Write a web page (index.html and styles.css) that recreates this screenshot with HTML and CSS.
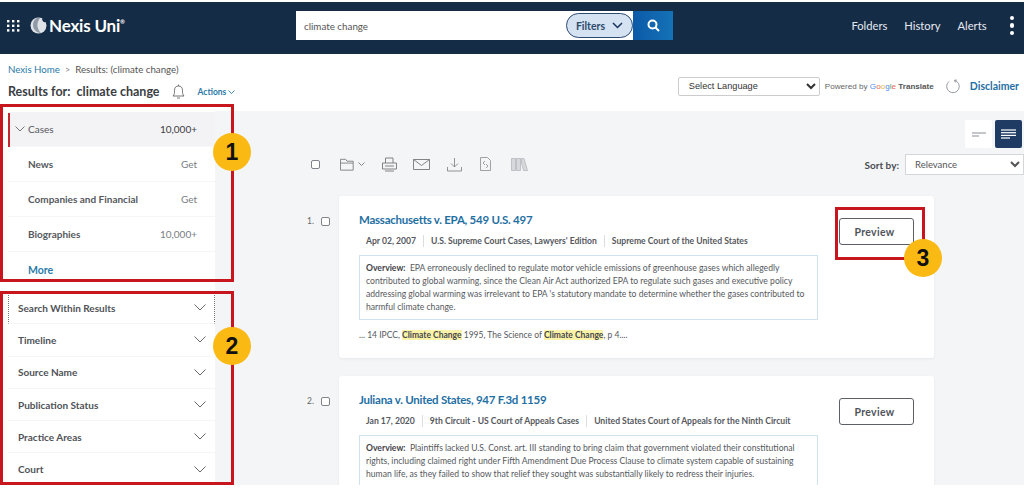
FILE: index.html
```html
<!DOCTYPE html>
<html lang="en">
<head>
    <meta charset="UTF-8">
    <title>Nexis Uni - Results</title>
    <link rel="stylesheet" href="styles.css">
</head>
<body>
    <div class="page">
        <header class="topbar">
            <div class="brand">
                <svg class="apps" width="13" height="12" viewBox="0 0 13 12" fill="#fff">
                    <rect x="0" y="0" width="2.4" height="2.4"/><rect x="5" y="0" width="2.4" height="2.4"/><rect x="10" y="0" width="2.4" height="2.4"/>
                    <rect x="0" y="4.6" width="2.4" height="2.4"/><rect x="5" y="4.6" width="2.4" height="2.4"/><rect x="10" y="4.6" width="2.4" height="2.4"/>
                    <rect x="0" y="9.2" width="2.4" height="2.4"/><rect x="5" y="9.2" width="2.4" height="2.4"/><rect x="10" y="9.2" width="2.4" height="2.4"/>
                </svg>
                <svg class="globe" width="17" height="17" viewBox="0 0 17 17">
                    <circle cx="8.5" cy="8.5" r="8" fill="#dfe3e8"/>
                    <path d="M7 1 C3 3 2 8 4 12 C6 15 9 16 11 16 C7 12 6 6 10 1 Z" fill="#8f9aa6"/>
                    <path d="M12 1.5 C15 1 16.5 3 16 5 C14 6 12 4 12 1.5 Z" fill="#152c47"/>
                </svg>
                <span class="brand-name">Nexis Uni<sup>®</sup></span>
            </div>
            <div class="search">
                <span class="search-text">climate change</span>
                <span class="filters">Filters
                    <svg width="11" height="7" viewBox="0 0 11 7" fill="none" stroke="#17345a" stroke-width="1.5"><path d="M1 1 L5.5 5.5 L10 1"/></svg>
                </span>
                <span class="search-btn">
                    <svg width="13" height="13" viewBox="0 0 13 13" fill="none" stroke="#fff" stroke-width="2"><circle cx="5.5" cy="5.5" r="4"/><path d="M8.5 8.5 L12 12"/></svg>
                </span>
            </div>
            <nav class="topnav">
                <a>Folders</a>
                <a>History</a>
                <a>Alerts</a>
                <span class="more-dots"><i></i><i></i><i></i></span>
            </nav>
        </header>

        <div class="subbar">
            <div>
                <div class="crumbs"><a>Nexis Home</a><span class="crumb-sep">&gt;</span>Results: (climate change)</div>
                <div class="results-for">
                    <h1>Results for:&nbsp; climate change</h1>
                    <svg width="13" height="15" viewBox="0 0 13 15" fill="none" stroke="#666" stroke-width="0.9"><path d="M1 12 C2.5 10.5 2.5 9 2.5 6.5 C2.5 3.5 4 2 6.5 2 C9 2 10.5 3.5 10.5 6.5 C10.5 9 10.5 10.5 12 12 Z"/><path d="M5 14 H8"/><path d="M6.5 0.5 V2"/></svg>
                    <a class="actions">Actions
                        <svg width="7" height="4" viewBox="0 0 7 4" fill="none" stroke="#1b6f9f" stroke-width="0.8"><path d="M0.5 0.5 L3.5 3.5 L6.5 0.5"/></svg>
                    </a>
                </div>
            </div>
            <div class="translate">
                <select class="lang-select"><option>Select Language</option></select>
                <span class="powered">Powered by <span class="google"><b class="g-blue">G</b><b class="g-red">o</b><b class="g-yellow">o</b><b class="g-blue">g</b><b class="g-green">l</b><b class="g-red">e</b></span> <strong>Translate</strong></span>
                <svg class="refresh" width="15" height="15" viewBox="0 0 15 15" fill="none" stroke="#8a8f96" stroke-width="0.9"><path d="M9.5 1.3 A6.3 6.3 0 1 1 4 2.5"/><path d="M9.5 1.3 L11.8 1 M9.5 1.3 L10.5 3.5"/></svg>
                <a class="disclaimer">Disclaimer</a>
            </div>
        </div>

        <div class="main">
            <aside class="sidebar">
                <ul class="sources">
                    <li class="source active">
                        <span class="source-name">
                            <svg width="10" height="6" viewBox="0 0 10 6" fill="none" stroke="#666" stroke-width="0.9"><path d="M0.5 0.5 L5 5 L9.5 0.5"/></svg>
                            Cases</span>
                        <span class="count">10,000+</span>
                    </li>
                    <li class="source"><span class="source-name">News</span><span class="get">Get</span></li>
                    <li class="source"><span class="source-name">Companies and Financial</span><span class="get">Get</span></li>
                    <li class="source"><span class="source-name">Biographies</span><span class="get">10,000+</span></li>
                    <li class="source source-more"><a>More</a></li>
                </ul>
                <ul class="facets">
                    <li class="facet first">Search Within Results<svg class="chev" width="12" height="7" viewBox="0 0 12 7"><path d="M0.5 0.5 L6 6 L11.5 0.5"/></svg></li>
                    <li class="facet">Timeline<svg class="chev" width="12" height="7" viewBox="0 0 12 7"><path d="M0.5 0.5 L6 6 L11.5 0.5"/></svg></li>
                    <li class="facet">Source Name<svg class="chev" width="12" height="7" viewBox="0 0 12 7"><path d="M0.5 0.5 L6 6 L11.5 0.5"/></svg></li>
                    <li class="facet">Publication Status<svg class="chev" width="12" height="7" viewBox="0 0 12 7"><path d="M0.5 0.5 L6 6 L11.5 0.5"/></svg></li>
                    <li class="facet">Practice Areas<svg class="chev" width="12" height="7" viewBox="0 0 12 7"><path d="M0.5 0.5 L6 6 L11.5 0.5"/></svg></li>
                    <li class="facet">Court<svg class="chev" width="12" height="7" viewBox="0 0 12 7"><path d="M0.5 0.5 L6 6 L11.5 0.5"/></svg></li>
                </ul>
            </aside>

            <section class="content">
                <div class="view-toggle">
                    <span class="view-btn">
                        <svg width="14" height="5" viewBox="0 0 14 5" fill="none" stroke="#8a8f96"><path d="M0 1 H14"/><path d="M0 4 H7"/></svg>
                    </span>
                    <span class="view-btn on">
                        <svg width="15" height="10" viewBox="0 0 15 10" fill="none" stroke="#fff" stroke-width="1.2"><path d="M0 1 H15"/><path d="M0 3.7 H15"/><path d="M0 6.4 H15"/><path d="M0 9 H9"/></svg>
                    </span>
                </div>
                <div class="toolbar">
                    <div class="tools">
                        <span class="box"></span>
                        <svg class="tool-folder" width="16" height="13" viewBox="0 0 17 13" fill="none" stroke="#777" stroke-width="0.9"><path d="M0.5 12.5 V1 H6 L7.5 3 H14 V5"/><path d="M0.5 12.5 H14 V5 H0.5"/></svg>
                        <svg class="tool-caret" width="7" height="4" viewBox="0 0 7 4" fill="none" stroke="#777" stroke-width="0.9"><path d="M0.5 0.5 L3.5 3.5 L6.5 0.5"/></svg>
                        <svg class="tool-print" width="15" height="15" viewBox="0 0 15 15" fill="none" stroke="#777" stroke-width="0.9"><path d="M3.5 6 V1 H11 V6"/><path d="M0.5 6 H14.5 V12 H0.5 Z"/><path d="M3 9 H12"/><path d="M3 14 H12"/></svg>
                        <svg width="17" height="11" viewBox="0 0 17 11" fill="none" stroke="#777" stroke-width="0.9"><path d="M0.5 0.5 H16.5 V10.5 H0.5 Z"/><path d="M0.5 0.5 L8.5 6.5 L16.5 0.5"/></svg>
                        <svg class="tool-save" width="15" height="15" viewBox="0 0 15 15" fill="none" stroke="#888" stroke-width="0.9"><path d="M7.5 1 V10"/><path d="M4 6.5 L7.5 10 L11 6.5"/><path d="M0.5 10 V14 H14.5 V10"/></svg>
                        <svg class="tool-doc" width="11" height="14" viewBox="0 0 11 14" fill="none" stroke="#999" stroke-width="0.9"><path d="M0.5 0.5 H7.5 L10.5 3.5 V13.5 H0.5 Z"/><path d="M3 6 L5 4 M3 6 L5 8"/><path d="M8 9 L6 7 M8 9 L6 11"/></svg>
                        <svg class="tool-books" width="17" height="13" viewBox="0 0 17 13" fill="#d6d8db" stroke="#aeb2b7" stroke-width="0.7"><path d="M0.5 0.5 H4.5 V12.5 H0.5 Z"/><path d="M5.5 0.5 H9.5 V12.5 H5.5 Z"/><path d="M10.5 0.5 H13 L16.5 12.5 H12.5 L10.5 5 Z"/></svg>
                    </div>
                    <label class="sort">Sort by:
                        <select class="sort-select"><option>Relevance</option></select>
                    </label>
                </div>

                <ol class="results">
                    <li class="result">
                        <div class="result-mark"><span class="num">1.</span><span class="box"></span></div>
                        <article class="card">
                            <div class="card-head">
                                <div>
                                    <h2 class="title">Massachusetts v. EPA, 549 U.S. 497</h2>
                                    <div class="meta"><span>Apr 02, 2007</span><span>U.S. Supreme Court Cases, Lawyers' Edition</span><span>Supreme Court of the United States</span></div>
                                </div>
                                <button class="preview">Preview</button>
                            </div>
                            <div class="overview"><b>Overview:</b>&nbsp; EPA erroneously declined to regulate motor vehicle emissions of greenhouse gases which allegedly<br>contributed to global warming, since the Clean Air Act authorized EPA to regulate such gases and executive policy<br>addressing global warming was irrelevant to EPA 's statutory mandate to determine whether the gases contributed to<br>harmful climate change.</div>
                            <p class="snippet">... 14 IPCC, <mark>Climate Change</mark> 1995, The Science of <mark>Climate Change</mark>, p 4....</p>
                        </article>
                    </li>
                    <li class="result">
                        <div class="result-mark"><span class="num">2.</span><span class="box"></span></div>
                        <article class="card">
                            <div class="card-head">
                                <div>
                                    <h2 class="title">Juliana v. United States, 947 F.3d 1159</h2>
                                    <div class="meta"><span>Jan 17, 2020</span><span>9th Circuit - US Court of Appeals Cases</span><span>United States Court of Appeals for the Ninth Circuit</span></div>
                                </div>
                                <button class="preview">Preview</button>
                            </div>
                            <div class="overview"><b>Overview:</b>&nbsp; Plaintiffs lacked U.S. Const. art. III standing to bring claim that government violated their constitutional<br>rights, including claimed right under Fifth Amendment Due Process Clause to climate system capable of sustaining<br>human life, as they failed to show that relief they sought was substantially likely to redress their injuries.</div>
                        </article>
                    </li>
                </ol>
            </section>
        </div>

        <div class="callout callout-1"></div>
        <div class="callout callout-2"></div>
        <div class="callout callout-3"></div>
        <span class="badge badge-1">1</span>
        <span class="badge badge-2">2</span>
        <span class="badge badge-3">3</span>
    </div>
</body>
</html>
```

FILE: styles.css
```css
* {
    box-sizing: border-box;
    margin: 0;
    padding: 0;
}
html, body {
    height: 496px;
    overflow: hidden;
    background: #fff;
}
body {
    font-family: Lato, "Open Sans", sans-serif;
    color: #4a4d52;
}
ul, ol {
    list-style: none;
}
.page {
    position: relative;
    height: 485px;
    overflow: hidden;
    padding-top: 2px;
}

/* top bar */
.topbar {
    height: 52px;
    padding-bottom: 5px;
    background: #152c47;
    display: flex;
    align-items: center;
    color: #fff;
}
.brand {
    width: 296px;
    padding-left: 7px;
    display: flex;
    align-items: center;
}
.globe {
    margin-left: 10px;
}
.brand-name {
    margin-left: 2px;
    font-size: 17px;
    font-weight: 700;
    letter-spacing: -0.2px;
}
.brand-name sup {
    font-size: 6px;
    vertical-align: 8px;
    line-height: 0;
}
.search {
    width: 377px;
    height: 29px;
    background: #fff;
    display: flex;
    align-items: center;
}
.search-text {
    flex: 1;
    padding-left: 8px;
    font-size: 9.8px;
    color: #555;
}
.filters {
    width: 67px;
    height: 25px;
    border: 1px solid #2c4a70;
    border-radius: 13px;
    background: #d4e2f2;
    color: #2d4a6b;
    font-size: 10.5px;
    font-weight: 700;
    display: flex;
    align-items: center;
    justify-content: center;
    gap: 7px;
}
.search-btn {
    width: 40px;
    height: 29px;
    background: linear-gradient(90deg, #0c5aa8, #1572b6);
    display: flex;
    align-items: center;
    justify-content: center;
}
.topnav {
    flex: 1;
    display: flex;
    align-items: center;
    justify-content: flex-end;
    padding-right: 10px;
    font-size: 11.2px;
    color: #e6eaef;
}
.topnav a {
    margin-right: 17px;
}
.more-dots {
    margin-left: 6px;
    display: flex;
    flex-direction: column;
    gap: 3px;
}
.more-dots i {
    width: 4.5px;
    height: 4.5px;
    background: #fff;
    border-radius: 50%;
}

/* breadcrumb row */
.subbar {
    height: 57px;
    padding: 9px 5px 0 8px;
    background: #fff;
    display: flex;
    justify-content: space-between;
}
.crumbs {
    font-size: 9.7px;
    line-height: 13px;
    color: #555;
}
.crumbs a {
    color: #2a78a8;
}
.crumb-sep {
    margin: 0 5px;
    font-size: 9px;
    color: #888;
}
.results-for {
    margin-top: 8px;
    display: flex;
    align-items: center;
}
.results-for h1 {
    font-size: 12.5px;
    font-weight: 700;
    color: #3a3d42;
    margin-right: 12px;
}
.actions {
    margin-left: 13px;
    font-size: 8.5px;
    font-weight: 700;
    color: #2a78a8;
}
.actions svg {
    vertical-align: 1px;
}
.translate {
    display: flex;
    align-items: center;
    height: 20px;
    margin-top: 13px;
}
.lang-select {
    width: 142px;
    height: 19px;
    padding-left: 6px;
    border: 1px solid #ccc;
    border-radius: 2px;
    background: #fff;
    font-family: "Liberation Sans", Arial, sans-serif;
    font-size: 9.2px;
    color: #333;
}
.powered {
    margin-left: 5px;
    font-family: "Liberation Sans", Arial, sans-serif;
    font-size: 8.1px;
    color: #666;
}
.powered strong {
    color: #555;
}
.google b {
    font-weight: 400;
}
.g-blue { color: #4d8df0; }
.g-red { color: #e5675c; }
.g-yellow { color: #e6bb3c; }
.g-green { color: #55ad6b; }
.refresh {
    margin-left: 11px;
}
.disclaimer {
    margin-left: 10px;
    font-size: 10.5px;
    font-weight: 700;
    color: #1f6fa3;
}

/* body */
.main {
    display: flex;
    height: 374px;
    background: #f4f5f7;
}
.sidebar {
    width: 215px;
    padding: 1px 0 0 8px;
    background: #fff;
    flex: none;
}
.sources {
    height: 180px;
}
.source {
    height: 35px;
    padding: 0 18px 0 20px;
    display: flex;
    align-items: center;
    justify-content: space-between;
    border-bottom: 1px solid #f6f6f7;
    font-size: 10px;
    font-weight: 700;
    color: #55585d;
}
.source.active {
    position: relative;
    background: #f3f3f5;
    font-weight: 400;
}
.source.active::before {
    content: "";
    position: absolute;
    left: 0;
    top: 1px;
    width: 2px;
    height: 34px;
    background: #c4262e;
}
.source.active .source-name svg {
    position: absolute;
    left: 7px;
    top: 14px;
}
.source.active .count {
    color: #3d4045;
}
.get {
    font-weight: 400;
    color: #7a7d82;
}
.source-more {
    border-bottom: 0;
    height: 36px;
}
.source-more a {
    color: #2a7cab;
    font-size: 10.5px;
}
.facet {
    height: 32.3px;
    padding: 0 9px 0 10px;
    display: flex;
    align-items: center;
    justify-content: space-between;
    border-bottom: 1px solid #f6f6f7;
    font-size: 10px;
    font-weight: 700;
    color: #4f5257;
}
.facet.first {
    border-left: 1px dotted #777;
    border-right: 1px dotted #777;
    padding-left: 9px;
    padding-right: 8px;
}
.chev {
    fill: none;
    stroke: #666;
    stroke-width: 1;
}
.content {
    flex: 1;
    padding-top: 9px;
    min-width: 0;
}
.view-toggle {
    display: flex;
    justify-content: flex-end;
    gap: 3px;
    padding-right: 2px;
}
.view-btn {
    width: 27px;
    height: 28px;
    border-radius: 2px;
    background: #fff;
    display: flex;
    align-items: center;
    justify-content: center;
}
.view-btn.on {
    background: #1f3a63;
}
.toolbar {
    height: 21px;
    margin-top: 6px;
    padding-left: 96px;
    display: flex;
    align-items: center;
    justify-content: space-between;
}
.tools {
    display: flex;
    align-items: center;
    gap: 16px;
    margin-top: -1px;
}
.tool-folder {
    margin-left: 4px;
}
.tool-caret {
    margin-left: -14px;
}
.tool-print {
    margin-left: 1px;
}
.tool-save {
    margin-left: 1px;
}
.tool-doc {
    margin-left: 2px;
}
.tool-books {
    margin-left: 4px;
}
.box {
    display: block;
    width: 9px;
    height: 9px;
    border: 1px solid #808388;
    border-radius: 2px;
    background: #fff;
}
.sort {
    display: flex;
    align-items: center;
    gap: 6px;
    font-size: 10px;
    font-weight: 700;
    color: #4a4d52;
}
.sort-select {
    width: 119px;
    height: 21px;
    padding-left: 5px;
    border: 1px solid #d5d6d8;
    background: #fff;
    font-family: Lato, sans-serif;
    font-size: 9.5px;
    color: #555;
}
.results {
    margin-top: 21px;
    padding-left: 92px;
}
.result {
    display: flex;
    margin-bottom: 18px;
}
.result-mark {
    width: 32px;
    padding-top: 20px;
    display: flex;
    align-items: center;
    align-self: flex-start;
    font-size: 8.5px;
    color: #666;
}
.num {
    width: 14px;
}
.card {
    width: 595px;
    height: 162px;
    padding: 16px 20px 0;
    border-radius: 3px;
    background: #fff;
    box-shadow: 0 1px 3px rgba(0, 0, 0, 0.06);
}
.card-head {
    display: flex;
    justify-content: space-between;
}
.title {
    font-size: 11.5px;
    line-height: 15px;
    font-weight: 700;
    letter-spacing: -0.25px;
    color: #1f6fa3;
}
.meta {
    margin-top: 8px;
    padding-left: 7px;
    display: flex;
    white-space: nowrap;
    font-size: 8.6px;
    line-height: 12px;
    font-weight: 700;
    color: #55585d;
}
.meta span + span {
    margin-left: 7px;
    padding-left: 7px;
    border-left: 1px solid #dcdde0;
}
.preview {
    width: 75px;
    height: 27px;
    margin-top: 6px;
    padding-right: 4px;
    border: 1px solid #5c6066;
    border-radius: 3px;
    background: #fff;
    font-family: Lato, sans-serif;
    font-size: 10.5px;
    font-weight: 700;
    letter-spacing: 0.3px;
    color: #50545a;
}
.overview {
    width: 459px;
    margin-top: 8px;
    padding: 6px 6px 5px;
    border: 1px solid #cfe3ee;
    white-space: nowrap;
    font-size: 8.6px;
    line-height: 13px;
    color: #55585d;
}
.overview b {
    color: #3f4247;
}
.snippet {
    margin-top: 9px;
    font-size: 8.5px;
    line-height: 12px;
    color: #55585d;
}
mark {
    background: #fdf3a8;
    color: #45484d;
    font-weight: 700;
}

/* red callouts from the guide */
.callout {
    position: absolute;
    border: 3px solid #c8161e;
}
.callout-1 {
    left: 0;
    top: 104px;
    width: 234px;
    height: 178px;
}
.callout-2 {
    left: 0;
    top: 291px;
    width: 234px;
    height: 194px;
}
.callout-3 {
    left: 835px;
    top: 207px;
    width: 90px;
    height: 53px;
}
.badge {
    position: absolute;
    width: 38px;
    height: 38px;
    border-radius: 50%;
    background: #fbb914;
    font-family: "Liberation Sans", Arial, sans-serif;
    font-size: 23px;
    font-weight: 700;
    line-height: 38px;
    text-align: center;
    color: #111;
}
.badge-1 {
    left: 213px;
    top: 133px;
}
.badge-2 {
    left: 213px;
    top: 327px;
}
.badge-3 {
    left: 904px;
    top: 239px;
}
```
